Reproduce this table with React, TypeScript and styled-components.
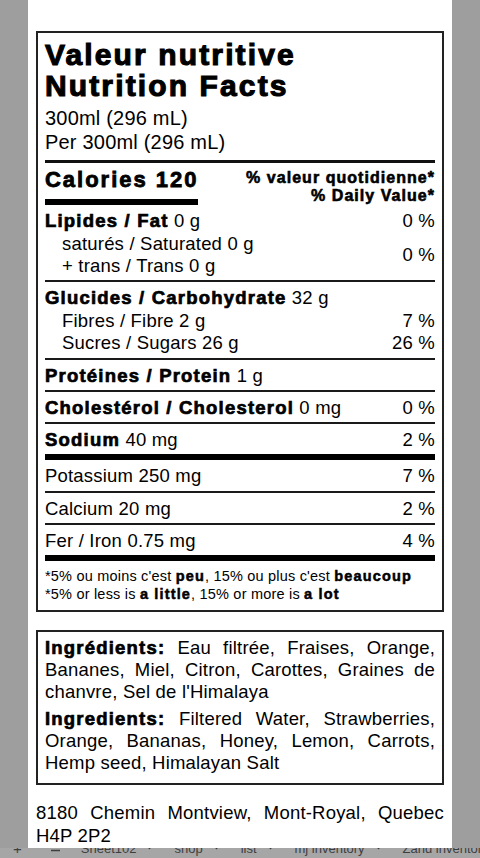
import React from "react";
import styled, { createGlobalStyle } from "styled-components";

const GlobalStyle = createGlobalStyle`
  html, body {
    margin: 0;
    padding: 0;
    background: #9e9e9e;
  }
  body {
    font-family: "Liberation Sans", Arial, Helvetica, sans-serif;
    color: #000;
  }
  * { box-sizing: border-box; }
`;

const Viewport = styled.div`
  width: 480px;
  height: 858px;
  display: flex;
  flex-direction: column;
  overflow: hidden;
  background: #9e9e9e;
`;

const Stage = styled.div`
  flex: 1;
  min-height: 0;
  display: flex;
  justify-content: center;
`;

const Page = styled.main`
  width: 424px;
  background: #fff;
  padding: 31px 8px 0;
  display: flex;
  flex-direction: column;
  font-family: "Liberation Sans", Arial, Helvetica, sans-serif;
  letter-spacing: 0.2px;
  color: #000;
`;

const Label = styled.section`
  border: 2px solid #222;
  padding: 6px 7px 6.5px;
`;

const Title = styled.h1`
  margin: 0;
  font-size: 30px;
  line-height: 31px;
  font-weight: 700;
  letter-spacing: 0.071em;
  -webkit-text-stroke: 1.1px #000;
`;

const Serving = styled.div`
  margin-top: 5px;
  padding-bottom: 6px;
  border-bottom: 3px solid #111;
  font-size: 20px;
  line-height: 24px;
`;

const CaloriesRow = styled.div`
  display: flex;
  justify-content: space-between;
  align-items: flex-start;
`;

const Calories = styled.div`
  padding: 4px 0 6px;
  border-bottom: 6px solid #000;
  font-size: 22px;
  line-height: 26px;
  font-weight: 700;
  letter-spacing: 0.09em;
  -webkit-text-stroke: 0.8px #000;
`;

const DVHeader = styled.div`
  padding-top: 6px;
  text-align: right;
  font-size: 16px;
  line-height: 18px;
  font-weight: 700;
  letter-spacing: 0.065em;
  -webkit-text-stroke: 0.6px #000;
`;

const Section = styled.div<{ $rule?: "thin" | "thick" }>`
  padding: 5px 0 2.75px;
  border-bottom: ${(p) => (p.$rule === "thick" ? "6px solid #000" : "2px solid #1a1a1a")};
  font-size: 18.5px;
  line-height: 22.5px;
`;

const Line = styled.div<{ $indent?: boolean }>`
  display: flex;
  justify-content: space-between;
  padding-left: ${(p) => (p.$indent ? "17px" : "0")};
`;

const SubGroup = styled.div`
  display: flex;
  justify-content: space-between;
  align-items: center;
  padding-left: 17px;
`;

const Strong = styled.b`
  font-weight: 700;
  letter-spacing: 0.065em;
  -webkit-text-stroke: 0.7px #000;
`;

const Value = styled.span`
  text-align: right;
  white-space: nowrap;
`;

const Footnote = styled.p`
  margin: 0;
  padding-top: 6px;
  font-size: 14.5px;
  line-height: 18.3px;

  b {
    letter-spacing: 0.08em;
    -webkit-text-stroke: 0.5px #000;
  }
`;

const Ingredients = styled.section`
  margin-top: 18px;
  border: 2px solid #222;
  padding: 5px 7px 9px;
  font-size: 18.5px;
  line-height: 22px;
`;

const Paragraph = styled.p<{ $gap?: boolean }>`
  margin: ${(p) => (p.$gap ? "5px" : "0")} 0 0;
  text-align: justify;
`;

const Address = styled.p`
  margin: 15.5px 0 0;
  font-size: 18.5px;
  line-height: 23px;
  text-align: justify;
`;

const TabBar = styled.nav`
  height: 10px;
  overflow: hidden;
  background: #a6a6a6;
  color: #3e3e3e;
  font-family: "Liberation Sans", Arial, Helvetica, sans-serif;
  font-size: 13px;
  line-height: 21px;
`;

const TabStrip = styled.div`
  display: flex;
  align-items: center;
  height: 21px;
  margin-top: -10px;
  padding-left: 13px;
  white-space: nowrap;
`;

const AddButton = styled.span`
  font-size: 15px;
`;

const MenuIcon = styled.svg`
  margin-left: 29px;
  flex: none;
`;

const Tab = styled.span`
  display: flex;
  align-items: center;
  margin-left: 21px;
  &:first-of-type {
    margin-left: 31px;
  }
`;

const Caret = styled.svg`
  margin-left: 10px;
  flex: none;
`;

type Nutrient = {
  bold: string;
  rest?: string;
  value?: string;
  rule?: "thin" | "thick";
};

const simpleRows: Nutrient[] = [
  { bold: "Protéines / Protein", rest: " 1 g" },
  { bold: "Cholestérol / Cholesterol", rest: " 0 mg", value: "0 %" },
  { bold: "Sodium", rest: " 40 mg", value: "2 %", rule: "thick" },
];

const mineralRows: Nutrient[] = [
  { bold: "", rest: "Potassium 250 mg", value: "7 %" },
  { bold: "", rest: "Calcium 20 mg", value: "2 %" },
  { bold: "", rest: "Fer / Iron 0.75 mg", value: "4 %", rule: "thick" },
];

const tabs = ["Sheet102", "shop", "list", "mj inventory", "Zand inventory"];

function Row({ item }: { item: Nutrient }) {
  return (
    <Section $rule={item.rule}>
      <Line>
        <span>
          {item.bold && <Strong>{item.bold}</Strong>}
          {item.rest}
        </span>
        {item.value && <Value>{item.value}</Value>}
      </Line>
    </Section>
  );
}

export default function App() {
  return (
    <>
      <GlobalStyle />
      <Viewport>
        <Stage>
          <Page>
            <Label>
              <Title>
                Valeur nutritive
                <br />
                Nutrition Facts
              </Title>
              <Serving>
                300ml (296 mL)
                <br />
                Per 300ml (296 mL)
              </Serving>
              <CaloriesRow>
                <Calories>Calories 120</Calories>
                <DVHeader>
                  % valeur quotidienne*
                  <br />% Daily Value*
                </DVHeader>
              </CaloriesRow>

              <Section>
                <Line>
                  <span>
                    <Strong>Lipides / Fat</Strong> 0 g
                  </span>
                  <Value>0 %</Value>
                </Line>
                <SubGroup>
                  <div>
                    <div>saturés / Saturated 0 g</div>
                    <div>+ trans / Trans 0 g</div>
                  </div>
                  <Value>0 %</Value>
                </SubGroup>
              </Section>

              <Section>
                <Line>
                  <span>
                    <Strong>Glucides / Carbohydrate</Strong> 32 g
                  </span>
                </Line>
                <Line $indent>
                  <span>Fibres / Fibre 2 g</span>
                  <Value>7 %</Value>
                </Line>
                <Line $indent>
                  <span>Sucres / Sugars 26 g</span>
                  <Value>26 %</Value>
                </Line>
              </Section>

              {simpleRows.map((r) => (
                <Row key={r.bold} item={r} />
              ))}
              {mineralRows.map((r) => (
                <Row key={r.rest} item={r} />
              ))}

              <Footnote>
                *5% ou moins c'est <b>peu</b>, 15% ou plus c'est{" "}
                <b>beaucoup</b>
                <br />
                *5% or less is <b>a little</b>, 15% or more is <b>a lot</b>
              </Footnote>
            </Label>

            <Ingredients>
              <Paragraph>
                <Strong>Ingrédients:</Strong> Eau filtrée, Fraises, Orange,
                Bananes, Miel, Citron, Carottes, Graines de chanvre, Sel de
                l'Himalaya
              </Paragraph>
              <Paragraph $gap>
                <Strong>Ingredients:</Strong> Filtered Water, Strawberries,
                Orange, Bananas, Honey, Lemon, Carrots, Hemp seed, Himalayan
                Salt
              </Paragraph>
            </Ingredients>

            <Address>8180 Chemin Montview, Mont-Royal, Quebec H4P 2P2</Address>
          </Page>
        </Stage>
        <TabBar>
          <TabStrip>
            <AddButton>+</AddButton>
            <MenuIcon width="9" height="21" viewBox="0 0 9 21">
              <path
                d="M0 4.5H9M0 8.5H9M0 12.5H9"
                stroke="#3e3e3e"
                strokeWidth="1.5"
              />
            </MenuIcon>
            {tabs.map((t, i) => (
              <Tab key={t}>
                {t}
                {i < tabs.length - 1 && (
                  <Caret width="7" height="21" viewBox="0 0 7 21">
                    <path d="M0 7.5H7L3.5 11.5Z" fill="#3e3e3e" />
                  </Caret>
                )}
              </Tab>
            ))}
          </TabStrip>
        </TabBar>
      </Viewport>
    </>
  );
}
